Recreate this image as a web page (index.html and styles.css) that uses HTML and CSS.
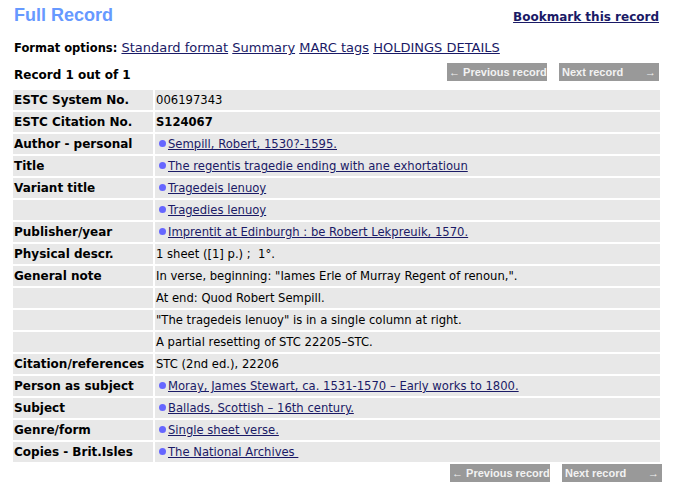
FILE: index.html
```html
<!DOCTYPE html>
<html>
<head>
<meta charset="utf-8">
<link rel="stylesheet" href="styles.css">
</head>
<body>
<div class="page">
  <div class="head">
    <h1 class="title">Full Record</h1>
    <a class="bookmark" href="#">Bookmark this record</a>
  </div>
  <div class="formats"><b>Format options:</b> <a href="#">Standard format</a> <a href="#">Summary</a> <a href="#">MARC tags</a> <a href="#">HOLDINGS DETAILS</a></div>
  <div class="recbar">
    <b class="count">Record 1 out of 1</b>
    <div class="nav top">
      <span class="btn">&larr; Previous record</span>
      <span class="btn next"><span>Next record</span><span>&rarr;</span></span>
    </div>
  </div>
  <table class="rec">
    <tr><th>ESTC System No.</th><td>006197343</td></tr>
    <tr><th>ESTC Citation No.</th><td><b>S124067</b></td></tr>
    <tr><th>Author - personal</th><td><i class="dot"></i><a href="#">Sempill, Robert, 1530?-1595.</a></td></tr>
    <tr><th>Title</th><td><i class="dot"></i><a href="#">The regentis tragedie ending with ane exhortatioun</a></td></tr>
    <tr><th>Variant title</th><td><i class="dot"></i><a href="#">Tragedeis lenuoy</a></td></tr>
    <tr><th></th><td><i class="dot"></i><a href="#">Tragedies lenuoy</a></td></tr>
    <tr><th>Publisher/year</th><td><i class="dot"></i><a href="#">Imprentit at Edinburgh : be Robert Lekpreuik, 1570.</a></td></tr>
    <tr><th>Physical descr.</th><td>1 sheet ([1] p.) ;&nbsp; 1°.</td></tr>
    <tr><th>General note</th><td>In verse, beginning: "Iames Erle of Murray Regent of renoun,".</td></tr>
    <tr><th></th><td>At end: Quod Robert Sempill.</td></tr>
    <tr><th></th><td>"The tragedeis lenuoy" is in a single column at right.</td></tr>
    <tr><th></th><td>A partial resetting of STC 22205–STC.</td></tr>
    <tr><th>Citation/references</th><td>STC (2nd ed.), 22206</td></tr>
    <tr><th>Person as subject</th><td><i class="dot"></i><a href="#">Moray, James Stewart, ca. 1531-1570 – Early works to 1800.</a></td></tr>
    <tr><th>Subject</th><td><i class="dot"></i><a href="#">Ballads, Scottish – 16th century.</a></td></tr>
    <tr><th>Genre/form</th><td><i class="dot"></i><a href="#">Single sheet verse.</a></td></tr>
    <tr><th>Copies - Brit.Isles</th><td><i class="dot"></i><a href="#">The National Archives&nbsp;</a></td></tr>
  </table>
  <div class="nav bottom">
    <span class="btn">&larr; Previous record</span>
    <span class="btn next"><span>Next record</span><span>&rarr;</span></span>
  </div>
</div>
</body>
</html>
```

FILE: styles.css
```css
html, body {
  margin: 0;
  background: #ffffff;
}
body {
  font-family: "DejaVu Sans", Verdana, sans-serif;
  font-size: 11px;
  color: #000000;
}
.page {
  width: 651px;
  padding: 0 0 0 11px;
}
a {
  color: #1a1a66;
  text-decoration: underline;
}
.head {
  display: flex;
  justify-content: space-between;
  align-items: flex-start;
  box-sizing: border-box;
  height: 37px;
  padding: 4px 3px 0 3px;
}
.title {
  margin: 0;
  font-family: "Liberation Sans", Arial, sans-serif;
  font-size: 18px;
  font-weight: bold;
  color: #6699ff;
  line-height: 22px;
}
.bookmark {
  font-weight: bold;
  font-size: 12px;
  line-height: 16px;
  margin-top: 5px;
}
.formats {
  box-sizing: border-box;
  height: 20px;
  padding: 3px 0 0 3px;
  font-size: 13px;
  line-height: 16px;
  white-space: nowrap;
}
.formats b {
  font-size: 11.5px;
}
.recbar {
  display: flex;
  justify-content: space-between;
  align-items: flex-start;
  box-sizing: border-box;
  height: 31px;
  padding: 0 3px;
}
.count {
  font-size: 12px;
  line-height: 16px;
  margin-top: 10px;
}
.nav {
  display: flex;
  gap: 12px;
}
.nav.top {
  margin-top: 6px;
}
.nav.bottom {
  justify-content: flex-end;
  margin-top: 0;
}
.btn {
  display: flex;
  width: 100px;
  height: 18px;
  box-sizing: border-box;
  align-items: center;
  padding: 0 2px;
  background: #999999;
  color: #f2f2f2;
  font-family: "Liberation Sans", Arial, sans-serif;
  font-weight: bold;
  font-size: 11px;
  white-space: nowrap;
}
.btn.next {
  justify-content: space-between;
  padding: 0 3px;
}
.rec {
  border-spacing: 2px;
  width: 651px;
}
.rec th, .rec td {
  background: #e8e8e8;
  height: 20px;
  box-sizing: border-box;
  padding: 0 1px;
  text-align: left;
  vertical-align: middle;
  white-space: nowrap;
}
.rec th {
  width: 140px;
  font-weight: bold;
  font-size: 12px;
}
.rec td {
  font-size: 11.6px;
}
.dot {
  display: inline-block;
  width: 7px;
  height: 7px;
  border-radius: 50%;
  background: #6666ff;
  margin: 0 2px 0 3px;
  vertical-align: 1px;
}
```
